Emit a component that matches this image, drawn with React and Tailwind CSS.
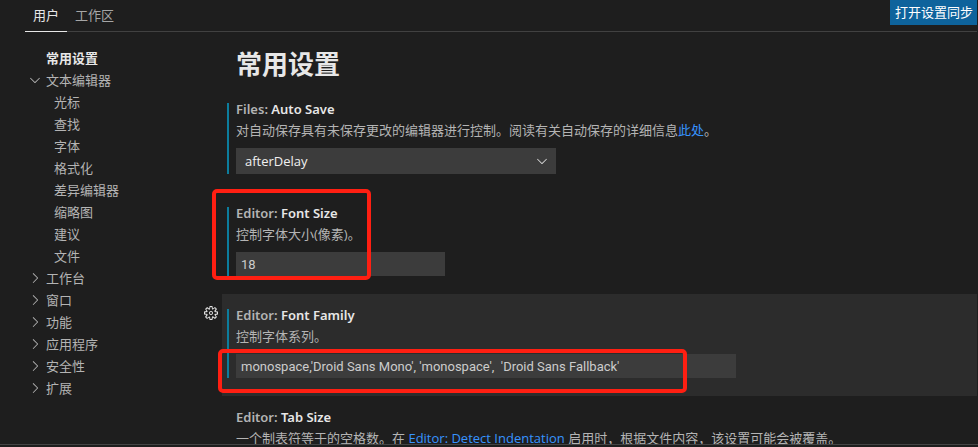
import React from "react";
import {
  VscChevronDown,
  VscChevronRight,
  VscGear,
} from "react-icons/vsc";

const tree = [
  { label: "常用设置", active: true },
  {
    label: "文本编辑器",
    children: ["光标", "查找", "字体", "格式化", "差异编辑器", "缩略图", "建议", "文件"],
  },
  { label: "工作台", closed: true },
  { label: "窗口", closed: true },
  { label: "功能", closed: true },
  { label: "应用程序", closed: true },
  { label: "安全性", closed: true },
  { label: "扩展", closed: true },
];

function Tree() {
  return (
    <nav className="w-[197px] shrink-0 pt-[15px] pl-[2px]">
      <ul>
        {tree.map((node) => (
          <li key={node.label}>
            <button
              type="button"
              className={
                node.active
                  ? "flex h-[22px] items-center font-bold text-[#e7e7e7]"
                  : "flex h-[22px] items-center text-[#b4b4b4]"
              }
            >
              <span className="flex w-[19px] items-center">
                {node.children && <VscChevronDown size={16} />}
                {node.closed && <VscChevronRight size={16} />}
              </span>
              {node.label}
            </button>
            {node.children && (
              <ul className="pl-[27px]">
                {node.children.map((child) => (
                  <li key={child}>
                    <button type="button" className="flex h-[22px] items-center text-[#b4b4b4]">
                      {child}
                    </button>
                  </li>
                ))}
              </ul>
            )}
          </li>
        ))}
      </ul>
    </nav>
  );
}

function Setting({ id, category, name, description, focused, modified, children }) {
  return (
    <section
      className={
        focused
          ? "relative bg-[#2c2c2c] px-[14px] pt-3 pb-[18px]"
          : "relative px-[14px] pt-3 pb-[18px]"
      }
    >
      {modified && (
        <span className="absolute top-[15px] bottom-[18px] left-[5px] w-[2px] bg-[#0c7d9d]" />
      )}
      {focused && (
        <button
          type="button"
          aria-label="更多操作"
          className="absolute top-[11px] -left-[19px] text-[#e0e0e0]"
        >
          <VscGear size={16} />
        </button>
      )}
      <label
        htmlFor={id}
        className="block h-[18px] font-['Noto_Sans',sans-serif] font-semibold text-[#e7e7e7]"
      >
        <span className="text-[#b4b4b4]">{category}: </span>
        {name}
      </label>
      <p className="mt-[3px] h-[18px] whitespace-nowrap text-[#b4b4b4]">{description}</p>
      {children && <div className="mt-[9px]">{children}</div>}
    </section>
  );
}

export default function App() {
  return (
    <div className="flex h-screen flex-col overflow-hidden bg-[#1e1e1e] font-['Open_Sans','Noto_Sans_CJK_SC',sans-serif] text-[13px] leading-[18px]">
      <div className="flex min-h-0 flex-1 flex-col overflow-hidden border-b border-[#444444] pr-px pl-[25px]">
        <header className="flex h-8 shrink-0 items-start justify-between border-b border-[#414141]">
          <div className="flex">
            <button
              type="button"
              className="h-8 border-b border-[#e7e7e7] px-2 pb-[2px] text-[#e7e7e7]"
            >
              用户
            </button>
            <button
              type="button"
              className="h-8 border-b border-transparent px-2 pb-[2px] text-[#a6a6a6]"
            >
              工作区
            </button>
          </div>
          <button
            type="button"
            className="h-[25px] bg-[#0e639c] pr-1 pb-[2px] pl-[5px] text-white"
          >
            打开设置同步
          </button>
        </header>

        <div className="flex">
          <Tree />
          <main className="min-w-0 flex-1">
            <h1 className="h-14 px-[14px] pt-4 text-[26px] leading-8 font-bold text-[#e7e7e7]">
              常用设置
            </h1>

            <Setting
              id="auto-save"
              category="Files"
              name="Auto Save"
              modified
              description={
                <>
                  对自动保存具有未保存更改的编辑器进行控制。阅读有关自动保存的详细信息
                  <a href="#auto-save" className="text-[#3794ff]">此处</a>。
                </>
              }
            >
              <div className="relative w-80">
                <select
                  id="auto-save"
                  defaultValue="afterDelay"
                  className="block h-[26px] w-full appearance-none bg-[#3c3c3c] px-[9px] text-[#f0f0f0]"
                >
                  <option>off</option>
                  <option>afterDelay</option>
                  <option>onFocusChange</option>
                </select>
                <VscChevronDown
                  size={16}
                  className="pointer-events-none absolute top-[5px] right-[6px] text-[#d8d8d8]"
                />
              </div>
            </Setting>

            <div className="relative">
              <Setting
                id="font-size"
                category="Editor"
                name="Font Size"
                modified
                description="控制字体大小(像素)。"
              >
                <input
                  id="font-size"
                  type="text"
                  defaultValue="18"
                  className="block h-6 w-[209px] bg-[#3c3c3c] px-[5px] font-['Roboto',sans-serif] text-[#cccccc]"
                />
              </Setting>
              <div className="pointer-events-none absolute -top-[3px] -left-[10px] h-[91px] w-[159px] rounded-[5px] border-4 border-[#ff1f12]" />
            </div>

            <div className="relative">
              <Setting
                id="font-family"
                category="Editor"
                name="Font Family"
                modified
                focused
                description="控制字体系列。"
              >
                <input
                  id="font-family"
                  type="text"
                  defaultValue="monospace,'Droid Sans Mono', 'monospace',  'Droid Sans Fallback'"
                  className="block h-6 w-[500px] bg-[#3c3c3c] px-[5px] font-['Roboto',sans-serif] text-[#cccccc]"
                />
              </Setting>
              <div className="pointer-events-none absolute top-[55px] -left-[4px] h-11 w-[469px] rounded-[5px] border-4 border-[#ff1f12]" />
            </div>

            <Setting
              id="tab-size"
              category="Editor"
              name="Tab Size"
              description={
                <>
                  一个制表符等于的空格数。在{" "}
                  <a href="#detect" className="text-[#3794ff]">Editor: Detect Indentation</a>{" "}
                  启用时，根据文件内容，该设置可能会被覆盖。
                </>
              }
            />
          </main>
        </div>
      </div>
      <div className="h-[2px] shrink-0" />
    </div>
  );
}
